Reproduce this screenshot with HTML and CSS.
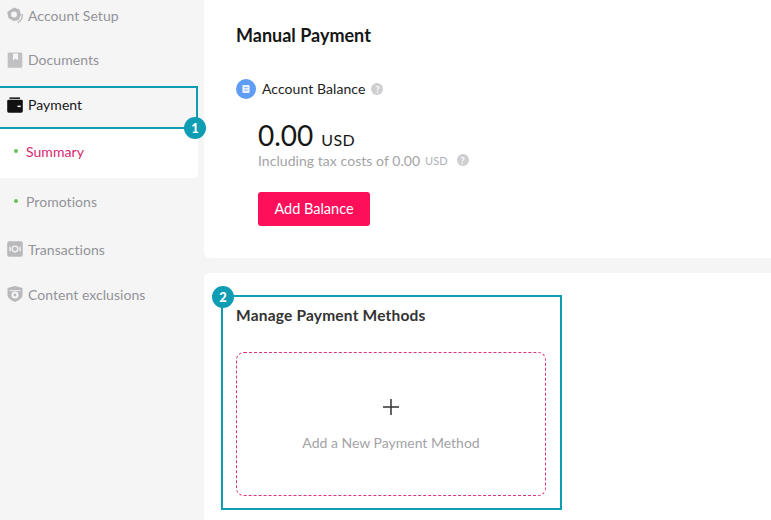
FILE: index.html
```html
<!DOCTYPE html>
<html lang="en">
<head>
<meta charset="utf-8">
<title>Manual Payment</title>
<link rel="stylesheet" href="styles.css">
</head>
<body>
<div class="app">
  <nav class="sidebar">
    <div class="nav-item first">
      <svg class="icon" viewBox="0 0 16 16"><path fill="#b9b9bc" d="M7 .5l5.500 2 1.500 5.500-2.500 5.200-5 .8-5-3L.2 5z"/><circle cx="7" cy="7.400" r="3" fill="#f5f5f6"/><path fill="none" stroke="#b9b9bc" stroke-width="1.300" d="M15.300 7c.3 3.800-1.500 7-4.500 8.600"/></svg>
      <span>Account Setup</span>
    </div>
    <div class="nav-item">
      <svg class="icon" viewBox="0 0 16 16"><path fill="#c1c1c4" fill-rule="evenodd" d="M1.500 .5h13a.8.800 0 0 1 .8.800v13.600a.8.800 0 0 1-.8.800h-13a.8.800 0 0 1-.8-.8v-13.600a.8.800 0 0 1 .8-.8zm4.500 1v7l2.500-2 2.500 2v-7z"/></svg>
      <span>Documents</span>
    </div>
    <div class="nav-item active">
      <svg class="icon" viewBox="0 0 16 16"><path fill="#111" d="M2.500 .4h10.500v1.500h-10.500z"/><path fill="#111" d="M.2 4Q.2 2.700 1.700 2.700h12.600Q15.800 2.700 15.800 4V14q0 1.700-1.500 1.700H1.700Q.2 15.700.2 14z"/><rect x="10.500" y="8.600" width="3.200" height="1.500" fill="#fff"/></svg>
      <span>Payment</span>
      <div class="callout callout-one"><b class="badge badge-one">1</b></div>
    </div>
    <div class="sub-panel"><i class="dot"></i><span>Summary</span></div>
    <div class="sub-item"><i class="dot"></i><span>Promotions</span></div>
    <div class="nav-item tx">
      <svg class="icon" viewBox="0 0 16 16"><rect x=".2" y=".2" width="15.600" height="15.600" rx="2" fill="#b9b9bc"/><circle cx="8" cy="8" r="2.800" fill="none" stroke="#f5f5f6" stroke-width="1.300"/><path stroke="#f5f5f6" stroke-width="1.400" d="M3 5.800v4.400M13 5.800v4.400"/></svg>
      <span>Transactions</span>
    </div>
    <div class="nav-item last">
      <svg class="icon" viewBox="0 0 16 16"><path fill="#b9b9bc" d="M8 0l7.500 2v6.500c0 3.500-3.500 5.900-7.500 7.500-4-1.600-7.500-4-7.500-7.500V2z"/><path fill="#f5f5f6" d="M2.500 4.200h11v.9h-11z"/><circle cx="8" cy="9" r="3.600" fill="#f5f5f6"/><circle cx="8" cy="9" r="1.400" fill="#b9b9bc"/></svg>
      <span>Content exclusions</span>
    </div>
  </nav>
  <main class="content">
    <section class="card card-top">
      <h1 class="page-title">Manual Payment</h1>
      <div class="balance-head">
        <span class="balance-icon"><svg viewBox="0 0 10 10"><path fill="#e8f0fd" fill-rule="evenodd" d="M1.500 0h7A1 1 0 0 1 9.500 1v8a1 1 0 0 1-1 1h-7a1 1 0 0 1-1-1V1a1 1 0 0 1 1-1zM3 2.800v1h4v-1zm0 3.200v1h4V6z"/></svg></span>
        <span class="balance-label">Account Balance</span>
        <span class="help">?</span>
      </div>
      <div class="amount"><span class="amount-num">0.00</span><span class="amount-cur">USD</span></div>
      <div class="tax"><span>Including tax costs of 0.00</span><span class="tax-cur">USD</span><span class="help">?</span></div>
      <button class="add-btn" type="button">Add Balance</button>
    </section>
    <section class="card card-bottom">
      <div class="methods">
        <b class="badge badge-two">2</b>
        <h2 class="methods-title">Manage Payment Methods</h2>
        <div class="add-method">
          <svg class="plus" viewBox="0 0 16 16"><path stroke="#333" stroke-width="1.500" d="M8 0v16M0 8h16"/></svg>
          <span>Add a New Payment Method</span>
        </div>
      </div>
    </section>
  </main>
</div>
</body>
</html>
```
FILE: styles.css
```css
* { box-sizing: border-box; }
html, body { margin: 0; height: 100%; }
body {
  width: 771px;
  height: 520px;
  overflow: hidden;
  background: #f5f5f6;
  font-family: "Lato", "Liberation Sans", sans-serif;
  color: #939398;
}
.app { display: flex; height: 520px; }
.sidebar { width: 204px; flex: none; display: flex; flex-direction: column; }
.nav-item {
  position: relative;
  height: 45px;
  display: flex;
  align-items: center;
  gap: 5px;
  padding-left: 7px;
  font-size: 14px;
  letter-spacing: 0.05px;
  flex: none;
}
.nav-item.first { height: 37px; padding-bottom: 7px; }
.nav-item.active { height: 46px; padding-bottom: 1px; color: #161616; }
.nav-item.tx { height: 48px; padding-bottom: 2px; }
.nav-item.last { height: 42px; padding-bottom: 2px; }
.icon { width: 16px; height: 16px; flex: none; }
.callout {
  position: absolute;
  left: 0;
  top: 4px;
  width: 198px;
  height: 43px;
  border: 2px solid #0f9db4;
  border-left: 0;
}
.badge {
  position: absolute;
  width: 22px;
  height: 22px;
  border-radius: 50%;
  background: #0f9db4;
  color: #fff;
  font-size: 13px;
  font-weight: 900;
  letter-spacing: 0;
  display: flex;
  align-items: center;
  justify-content: center;
}
.badge-one { right: -10px; bottom: -12px; }
.sub-panel, .sub-item {
  display: flex;
  align-items: center;
  gap: 8px;
  padding-left: 14px;
  font-size: 14px;
  letter-spacing: 0.05px;
  flex: none;
}
.sub-panel {
  width: 198px;
  height: 50px;
  padding-bottom: 4px;
  background: #fff;
  border-radius: 0 0 4px 0;
  color: #d81f6d;
}
.sub-item { height: 48px; padding-bottom: 2px; }
.dot { width: 4px; height: 4px; border-radius: 50%; background: #6cc25a; flex: none; }
.content { flex: 1; display: flex; flex-direction: column; gap: 15px; }
.card { background: #fff; }
.card-top { height: 258px; border-radius: 0 0 0 6px; padding: 25px 32px 0; }
.card-bottom { flex: 1; border-radius: 6px 0 0 0; padding: 22px 0 10px 17px; }
.page-title { margin: 0; font-size: 18px; line-height: 20px; font-weight: 700; color: #161616; }
.balance-head { display: flex; align-items: center; margin-top: 34px; height: 20px; }
.balance-icon {
  width: 20px; height: 20px; border-radius: 50%; background: #5f9cf3;
  display: flex; align-items: center; justify-content: center; margin-right: 6px;
}
.balance-icon svg { width: 8px; height: 8px; }
.balance-label { font-size: 14px; letter-spacing: 0.07px; color: #222; margin-right: 6px; padding-bottom: 2px; }
.help {
  width: 12px; height: 12px; border-radius: 50%; background: #cfcfd2; color: #fff;
  font-size: 9px; font-weight: 700; letter-spacing: 0; display: flex; align-items: center; justify-content: center;
}
.amount { margin: 21px 0 0 22px; display: flex; align-items: baseline; gap: 8px; color: #161616; height: 30px; }
.amount-num { font-size: 28px; line-height: 30px; }
.amount-cur { font-size: 16px; letter-spacing: 0.4px; }
.tax { margin: 1px 0 0 22px; display: flex; align-items: center; font-size: 14px; letter-spacing: 0.05px; color: #a3a3a7; height: 18px; }
.tax-cur { font-size: 11px; margin: 0 9px 0 5px; color: #b0b0b4; }
.add-btn {
  display: block; margin: 23px 0 0 22px; width: 112px; height: 34px; border: 0; border-radius: 3px; padding: 0 0 2px;
  background: #fe0f5a; color: #fff; font: 14.500px "Lato", "Liberation Sans", sans-serif;
}
.methods {
  position: relative;
  width: 341px;
  height: 215px;
  border: 2px solid #0f9db4;
  padding: 9px 13px 0;
}
.badge-two { left: -11px; top: -11px; }
.methods-title { margin: 0; font-size: 15.500px; line-height: 18px; font-weight: 700; letter-spacing: 0.2px; color: #333; }
.add-method {
  margin-top: 28px;
  width: 310px;
  height: 144px;
  border: 1px dashed #d9347c;
  border-radius: 8px;
  display: flex;
  flex-direction: column;
  align-items: center;
  gap: 19px;
  padding-top: 46px;
  font-size: 14px;
  color: #a3a3a7;
}
.plus { width: 16px; height: 16px; flex: none; }
```
